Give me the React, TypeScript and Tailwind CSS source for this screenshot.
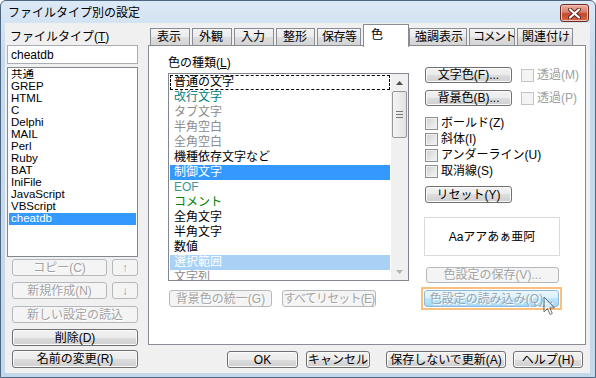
import React from 'react';

const font = "font-['Liberation_Sans','Noto_Sans_CJK_JP',sans-serif]";

const Btn = ({
  children,
  className = '',
  disabled
}: {
  children: React.ReactNode;
  className?: string;
  disabled?: boolean;
}) => (
  <div
    className={`flex shrink-0 items-center justify-center overflow-hidden rounded-[3px] border text-[12px] leading-none ${
      disabled
        ? 'border-[#b5b9bc] bg-[#f4f4f4] text-[#a3a3a3] [text-shadow:1px_1px_0_#ffffff]'
        : 'border-[#707070] bg-[linear-gradient(#f2f2f2,#ebebeb_50%,#dddddd_50%,#cfcfcf)] text-black shadow-[inset_0_0_0_1px_#fbfbfb]'
    } ${className}`}
  >
    {children}
  </div>
);

const Check = ({ label, disabled }: { label: string; disabled?: boolean }) => (
  <div className="flex h-[16px] items-center">
    <span
      className={`h-[13px] w-[13px] shrink-0 border ${
        disabled
          ? 'border-[#c4c4c4] bg-[#f4f4f4]'
          : 'border-[#8e8f8f] bg-[linear-gradient(135deg,#d2d2d2,#f4f4f4)] shadow-[inset_0_0_0_1px_#f0f0f0]'
      }`}
    />
    <span className={`ml-[3px] text-[12px] leading-none ${disabled ? 'text-[#a0a0a0]' : 'text-black'}`}>
      {label}
    </span>
  </div>
);

const tabs = [
  { label: '表示', w: 'w-[40px]', ml: 'ml-[2px]', pad: 'pl-[6px]' },
  { label: '外観', w: 'w-[40px]', ml: 'ml-[2px]', pad: 'pl-[6px]' },
  { label: '入力', w: 'w-[40px]', ml: 'ml-[2px]', pad: 'pl-[6px]' },
  { label: '整形', w: 'w-[39px]', ml: 'ml-[2px]', pad: 'pl-[6px]' },
  { label: '保存等', w: 'w-[44px]', ml: 'ml-[2px]', pad: 'pl-[4px] tracking-[-0.5px]' },
  { label: '色', w: 'w-[46px]', ml: 'ml-[2px]', active: true, pad: '' },
  { label: '強調表示', w: 'w-[58px]', ml: 'ml-0', pad: 'pl-[5px]' },
  { label: 'コメント', w: 'w-[46px]', ml: 'ml-[2px]', pad: 'pl-[3px] tracking-[-1.5px]' },
  { label: '関連付け', w: 'w-[56px]', ml: 'ml-[2px]', pad: 'pl-[4px]' }
];

const fileTypes = ['共通', 'GREP', 'HTML', 'C', 'Delphi', 'MAIL', 'Perl', 'Ruby', 'BAT', 'IniFile', 'JavaScript', 'VBScript', 'cheatdb'];

const colorKinds: { label: string; cls: string }[] = [
  { label: '普通の文字', cls: 'text-black outline-1 outline-dashed outline-black -outline-offset-1' },
  { label: '改行文字', cls: 'text-[#008080]' },
  { label: 'タブ文字', cls: 'text-[#8c8c8c]' },
  { label: '半角空白', cls: 'text-[#8c8c8c]' },
  { label: '全角空白', cls: 'text-[#8c8c8c]' },
  { label: '機種依存文字など', cls: 'text-black' },
  { label: '制御文字', cls: 'text-white bg-[#3399ff]' },
  { label: 'EOF', cls: 'text-[#3f9595]' },
  { label: 'コメント', cls: 'text-[#008000]' },
  { label: '全角文字', cls: 'text-black' },
  { label: '半角文字', cls: 'text-black' },
  { label: '数値', cls: 'text-black' },
  { label: '選択範囲', cls: 'text-white bg-[#a9d0f5]' },
  { label: '文字列', cls: 'text-[#8c8c8c]' }
];

export default function App() {
  return (
    <div
      className={`${font} relative flex h-[378px] w-[596px] flex-col whitespace-nowrap rounded-t-[6px] border border-[#4f6680] bg-[linear-gradient(#dce9f6,#c6d9ed_60px,#c4d8ec)] text-[12px] text-black`}
    >
      {/* title bar */}
      <div className="flex h-[22px] shrink-0 items-start">
        <div className="ml-[7px] mt-[5px] text-[12px] leading-[14px]">ファイルタイプ別の設定</div>
        <div className="ml-auto mr-[6px] mt-[3px] flex h-[18px] w-[29px] items-center justify-center rounded-[3px] border border-[#6b2b1f] bg-[linear-gradient(#eab0a2,#d8806c_45%,#c4452c_55%,#d46a4e)] shadow-[inset_0_0_0_1px_#f0c4b8]">
          <svg width="13" height="11" viewBox="0 0 13 11">
            <path d="M2 1.5 L11 9.5 M11 1.5 L2 9.5" stroke="#5a2418" strokeWidth="4" strokeLinecap="round" />
            <path d="M2 1.5 L11 9.5 M11 1.5 L2 9.5" stroke="#ffffff" strokeWidth="2.2" strokeLinecap="round" />
          </svg>
        </div>
      </div>

      {/* client */}
      <div className="ml-[4px] flex h-[350px] w-[585px] bg-[#f0f0f0]">
        {/* left column */}
        <div className="flex w-[143px] shrink-0 flex-col">
          <div className="mt-[6px] h-[16px] pl-[5px] leading-[16px]">
            ファイルタイプ(<span className="underline">T</span>)
          </div>
          <div className="ml-[2px] flex h-[19px] w-[131px] items-center border border-[#abadb3] bg-white pl-[3px] leading-none">
            cheatdb
          </div>
          <div className="ml-[2px] mt-[3px] h-[190px] w-[131px] border border-[#828790] bg-white pt-[1px]">
            {fileTypes.map((t) => (
              <div
                key={t}
                className={`mx-[1px] flex h-[12px] items-center overflow-hidden pl-[2px] text-[11.5px] leading-none ${
                  t === 'cheatdb' ? 'bg-[#3399ff] text-white' : 'text-black'
                }`}
              >
                {t}
              </div>
            ))}
          </div>
          <div className="ml-[7px] mt-[2px] flex">
            <Btn disabled className="h-[17px] w-[95px]">コピー(C)</Btn>
            <Btn disabled className="ml-[5px] h-[17px] w-[26px]">↑</Btn>
          </div>
          <div className="ml-[7px] mt-[6px] flex">
            <Btn disabled className="h-[17px] w-[95px]">新規作成(N)</Btn>
            <Btn disabled className="ml-[5px] h-[17px] w-[26px]">↓</Btn>
          </div>
          <Btn disabled className="ml-[7px] mt-[7px] h-[17px] w-[126px]">新しい設定の読込</Btn>
          <Btn className="ml-[7px] mt-[6px] h-[17px] w-[126px]">削除(D)</Btn>
          <Btn className="ml-[7px] mt-[4px] h-[18px] w-[126px]">名前の変更(R)</Btn>
        </div>

        {/* right column */}
        <div className="flex w-[442px] flex-col">
          {/* tabs */}
          <div className="relative z-10 flex h-[22px] items-end">
            {tabs.map((t) =>
              t.active ? (
                <div
                  key={t.label}
                  className={`${t.ml} ${t.w} -mb-[2px] h-[23px] border border-b-0 border-[#898c95] bg-white pl-[7px] pt-[3px] leading-[14px]`}
                >
                  {t.label}
                </div>
              ) : (
                <div
                  key={t.label}
                  className={`${t.ml} ${t.w} ${t.pad} h-[17px] overflow-hidden border border-b-0 border-[#898c95] bg-[linear-gradient(#f3f3f3,#ebebeb_50%,#dedede_50%,#d4d4d4)] pt-[1px] leading-[14px]`}
                >
                  {t.label}
                </div>
              )
            )}
          </div>

          {/* panel */}
          <div className="flex h-[300px] w-[438px] border border-[#898c95] bg-white">
            {/* color kinds */}
            <div className="flex w-[259px] shrink-0 flex-col pl-[19px]">
              <div className="mt-[9px] h-[16px] leading-[16px]">
                色の種類(<span className="underline">L</span>)
              </div>
              <div className="mt-[2px] flex h-[208px] w-[241px] border border-[#828790] bg-white">
                <div className="flex-1 overflow-hidden pt-[1px]">
                  {colorKinds.map((c) => (
                    <div key={c.label} className={`mx-[1px] h-[15px] pl-[4px] leading-[15px] ${c.cls}`}>
                      {c.label}
                    </div>
                  ))}
                </div>
                <div className="flex w-[17px] shrink-0 flex-col bg-[#f0f0f0]">
                  <div className="flex h-[17px] items-center justify-center">
                    <svg width="7" height="4" viewBox="0 0 7 4">
                      <path d="M0 4 L3.5 0 L7 4 Z" fill="#4d4d4d" />
                    </svg>
                  </div>
                  <div className="mx-[1px] flex h-[47px] flex-col items-center justify-center gap-[2px] rounded-[2px] border border-[#979797] bg-[linear-gradient(90deg,#f4f4f4,#e2e2e2)]">
                    <span className="h-px w-[7px] bg-[#777]" />
                    <span className="h-px w-[7px] bg-[#777]" />
                    <span className="h-px w-[7px] bg-[#777]" />
                  </div>
                  <div className="flex-1" />
                  <div className="flex h-[17px] items-center justify-center">
                    <svg width="7" height="4" viewBox="0 0 7 4">
                      <path d="M0 0 L3.5 4 L7 0 Z" fill="#b5b5b5" />
                    </svg>
                  </div>
                </div>
              </div>
              <div className="mt-[9px] flex">
                <Btn disabled className="ml-[1px] h-[17px] w-[103px]">背景色の統一(G)</Btn>
                <Btn disabled className="ml-[10px] h-[17px] w-[94px] tracking-[-0.8px]">すべてリセット(E)</Btn>
              </div>
            </div>

            {/* attributes */}
            <div className="ml-[16px] flex w-[140px] flex-col">
              <div className="mt-[21px] flex items-center">
                <Btn className="ml-[1px] h-[16px] w-[87px]">文字色(F)...</Btn>
                <div className="ml-[9px]">
                  <Check label="透過(M)" disabled />
                </div>
              </div>
              <div className="mt-[7px] flex items-center">
                <Btn className="ml-[1px] h-[16px] w-[87px]">背景色(B)...</Btn>
                <div className="ml-[9px]">
                  <Check label="透過(P)" disabled />
                </div>
              </div>
              <div className="ml-[1px] mt-[9px] flex flex-col">
                <Check label="ボールド(Z)" />
                <Check label="斜体(I)" />
                <Check label="アンダーライン(U)" />
                <Check label="取消線(S)" />
              </div>
              <Btn className="ml-[1px] mt-[7px] h-[17px] w-[87px]">リセット(Y)</Btn>
              <div className="mt-[14px] flex h-[39px] w-[136px] items-center justify-center border border-[#dadada] bg-white leading-none">
                Aaアアあぁ亜阿
              </div>
              <Btn disabled className="ml-[2px] mt-[11px] h-[16px] w-[133px]">色設定の保存(V)...</Btn>
              <div className="-ml-[3px] mt-[4px] flex h-[23px] w-[141px] items-center justify-center border-2 border-[#fbbf80]">
                <div className="flex h-[17px] w-[135px] items-center justify-center rounded-[3px] border border-[#8fb9d8] bg-[linear-gradient(#eaf6fd,#d9f0fc_50%,#bee6fd_50%,#a7d9f5)] text-[12px] leading-none text-[#9aa6ae] [text-shadow:1px_1px_0_#ffffff]">
                  色設定の読み込み(Q)...
                </div>
              </div>
            </div>
          </div>

          {/* dialog buttons */}
          <div className="mt-[6px] flex">
            <Btn className="ml-[79px] h-[17px] w-[71px]">OK</Btn>
            <Btn className="ml-[8px] h-[17px] w-[64px]">キャンセル</Btn>
            <Btn className="ml-[16px] h-[17px] w-[120px]">保存しないで更新(A)</Btn>
            <Btn className="ml-[7px] h-[17px] w-[70px]">ヘルプ(H)</Btn>
          </div>
        </div>
      </div>

      {/* mouse pointer */}
      <svg className="absolute left-[542px] top-[295px]" width="13" height="20" viewBox="0 0 13 20">
        <path d="M1 1 L1 16 L4.5 12.5 L7 18.5 L9.3 17.5 L6.8 11.8 L11.5 11.8 Z" fill="#ffffff" stroke="#000000" strokeWidth="1" strokeLinejoin="round" opacity="0.55" />
      </svg>
    </div>
  );
}
